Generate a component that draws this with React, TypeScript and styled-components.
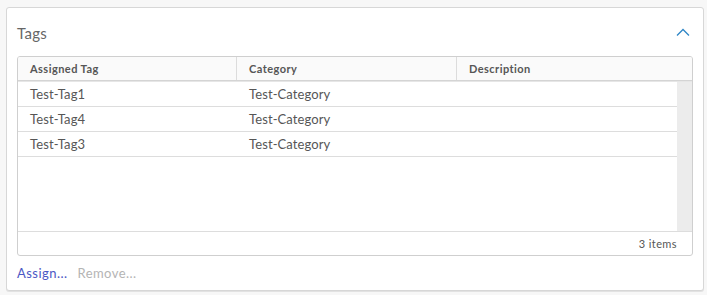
import React from 'react';
import styled, { createGlobalStyle } from 'styled-components';

const GlobalStyle = createGlobalStyle`
  html, body {
    margin: 0;
    padding: 0;
    background: #f7f7f7;
  }
  body {
    font-family: Lato, "Noto Sans", sans-serif;
    color: #565656;
  }
`;

const Page = styled.div`
  padding: 7px 4px 5px 6px;
`;

const Card = styled.section`
  box-sizing: border-box;
  width: 698px;
  height: 284px;
  background: #fff;
  border: 1px solid #d7d7d7;
  border-radius: 3px;
  box-shadow: 0 1px 0 #e2e2e2;
  padding: 0 10px 0 10px;
  display: flex;
  flex-direction: column;
`;

const Header = styled.div`
  height: 48px;
  display: flex;
  align-items: center;
  justify-content: space-between;
  padding-top: 1px;
  box-sizing: border-box;
`;

const Title = styled.h3`
  margin: 0;
  font-size: 15px;
  font-weight: 400;
  color: #666;
  letter-spacing: 0.3px;
`;

const Toggle = styled.button`
  border: 0;
  background: none;
  padding: 0;
  width: 16px;
  height: 16px;
  display: flex;
  align-items: center;
  justify-content: center;
  margin-right: 2px;
  cursor: pointer;
`;

const Grid = styled.div`
  box-sizing: border-box;
  height: 200px;
  border: 1px solid #cfcfcf;
  border-radius: 3px;
  display: flex;
  flex-direction: column;
  overflow: hidden;
`;

const Cols = '219px 220px 1fr';

const HeadRow = styled.div`
  display: grid;
  grid-template-columns: ${Cols};
  height: 23px;
  background: #fafafa;
  border-bottom: 1px solid #d4d4d4;
  box-shadow: 0 1px 0 #e6e6e6;
  flex-shrink: 0;
`;

const HeadCell = styled.div<{ $last?: boolean }>`
  display: flex;
  align-items: center;
  padding-left: 12px;
  font-size: 11px;
  font-weight: 700;
  letter-spacing: 0.45px;
  color: #565656;
  border-right: ${(p) => (p.$last ? 'none' : '1px solid #dcdcdc')};
`;

const Body = styled.div`
  flex: 1;
  display: flex;
  margin-top: 1px;
`;

const Rows = styled.div`
  flex: 1;
`;

const Gutter = styled.div`
  width: 15px;
  background: #ececec;
`;

const Row = styled.div`
  display: grid;
  grid-template-columns: ${Cols};
  height: 25px;
  box-sizing: border-box;
  border-bottom: 1px solid #dddddd;
`;

const Cell = styled.div`
  display: flex;
  align-items: center;
  padding-left: 12px;
  font-size: 13px;
  letter-spacing: 0.1px;
  color: #565656;
`;

const Footer = styled.div`
  height: 23px;
  border-top: 1px solid #dddddd;
  display: flex;
  align-items: center;
  justify-content: flex-end;
  padding-right: 15px;
  font-size: 11px;
  letter-spacing: 0.4px;
  color: #565656;
  flex-shrink: 0;
`;

const Actions = styled.div`
  display: flex;
  gap: 10px;
  height: 32px;
  align-items: center;
  padding-top: 1px;
`;

const Action = styled.button<{ $disabled?: boolean }>`
  border: 0;
  background: none;
  padding: 0;
  font-family: inherit;
  font-size: 13px;
  letter-spacing: 0.45px;
  color: ${(p) => (p.$disabled ? '#b4b4b4' : '#4b57c4')};
  cursor: ${(p) => (p.$disabled ? 'default' : 'pointer')};
`;

const tags = [
  { tag: 'Test-Tag1', category: 'Test-Category', description: '' },
  { tag: 'Test-Tag4', category: 'Test-Category', description: '' },
  { tag: 'Test-Tag3', category: 'Test-Category', description: '' },
];

const App: React.FC = () => {
  return (
    <Page>
      <GlobalStyle />
      <Card>
        <Header>
          <Title>Tags</Title>
          <Toggle aria-label="Collapse">
            <svg width="14" height="9" viewBox="0 0 14 9">
              <polyline points="1,7.5 7,1.5 13,7.5" fill="none" stroke="#2f86c6" strokeWidth="1.3" />
            </svg>
          </Toggle>
        </Header>
        <Grid>
          <HeadRow>
            <HeadCell>Assigned Tag</HeadCell>
            <HeadCell>Category</HeadCell>
            <HeadCell $last>Description</HeadCell>
          </HeadRow>
          <Body>
            <Rows>
              {tags.map((t) => (
                <Row key={t.tag}>
                  <Cell>{t.tag}</Cell>
                  <Cell>{t.category}</Cell>
                  <Cell>{t.description}</Cell>
                </Row>
              ))}
            </Rows>
            <Gutter />
          </Body>
          <Footer>{tags.length} items</Footer>
        </Grid>
        <Actions>
          <Action>Assign...</Action>
          <Action $disabled>Remove...</Action>
        </Actions>
      </Card>
    </Page>
  );
};

export default App;
